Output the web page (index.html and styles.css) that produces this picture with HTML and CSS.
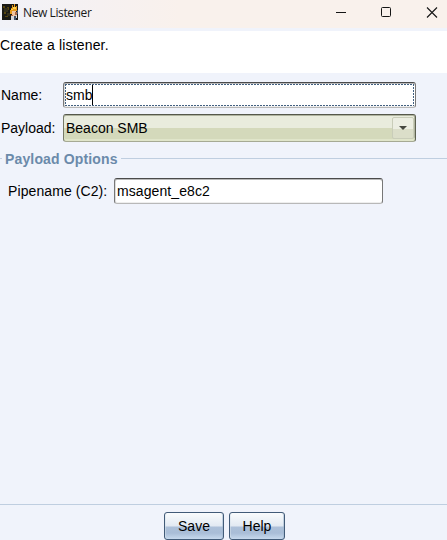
FILE: index.html
```html
<!DOCTYPE html>
<html lang="en">
<head>
<meta charset="utf-8">
<title>New Listener</title>
<link rel="stylesheet" href="styles.css">
</head>
<body>
<div class="window">
  <header class="titlebar">
    <svg class="app-icon" width="16" height="16" viewBox="0 0 16 16" shape-rendering="crispEdges">
      <path fill="#191a16" d="M0 0h16v16H0z"/>
      <path fill="#57470f" d="M1 2h2v2H1zM5 3h2v3H5zM2 8h2v2H2zM3 12h3v1H3z"/>
      <path fill="#33301c" d="M2 4h4v4H2zM5 9h3v3H5z"/>
      <path fill="#e69a1c" d="M9 4h6v3H9zM10 1h1v3h-1zM12 0h1v4h-1zM14 2h1v4h-1zM8 6h2v4H8z"/>
      <path fill="#ffd34a" d="M11 3h3v2h-3zM9 5h2v1H9z"/>
      <path fill="#f1c6a0" d="M10 7h4v5h-4z"/>
      <path fill="#b06a45" d="M13 8h2v3h-2zM9 11h2v2H9z"/>
      <path fill="#d9d8da" d="M9 12h3v4H9zM14 11h1v3h-1z"/>
      <path fill="#43536a" d="M12 12h2v4h-2zM15 6h1v4h-1z"/>
    </svg>
    <span class="title">New Listener</span>
    <svg class="controls" width="104" height="12" viewBox="0 0 104 12" fill="none" stroke="#151515">
      <path d="M1 6.5h10"/>
      <rect x="46.5" y="1.5" width="9" height="9" rx="1"/>
      <path d="M92 1.5l10 10M102 1.5l-10 10" stroke-width="1.1"/>
    </svg>
  </header>
  <div class="description">Create a listener.</div>
  <main class="form">
    <div class="row">
      <span class="label">Name:</span>
      <div class="field focused"><span>smb</span><i class="caret"></i></div>
    </div>
    <div class="row combo-row">
      <span class="label">Payload:</span>
      <div class="field combo"><span>Beacon SMB</span>
        <span class="arrow"><svg width="8" height="4" viewBox="0 0 8 4"><path fill="#464840" d="M0 0h8L4 4z"/></svg></span>
      </div>
    </div>
    <div class="legend"><span>Payload Options</span></div>
    <div class="row pipe-row">
      <span class="label">Pipename (C2):</span>
      <div class="field pipe"><span>msagent_e8c2</span></div>
    </div>
  </main>
  <footer class="actions">
    <button class="btn save">Save</button>
    <button class="btn help">Help</button>
  </footer>
</div>
</body>
</html>
```
FILE: styles.css
```css
* { box-sizing: border-box; }
body { margin: 0; }
.window {
  width: 447px; height: 540px; overflow: hidden;
  display: flex; flex-direction: column;
  background: #f0f3fb; color: #000;
  font: 14px/18px "Liberation Sans", Arial, sans-serif;
}
.titlebar {
  height: 28px; flex: none; display: flex; align-items: center;
  padding: 0 8px 4px 2px;
  background: linear-gradient(90deg, #f1f2f8 0, #f6f1f1 100px, #f9f1ec 180px);
}
.app-icon { flex: none; }
.title {
  margin-left: 5px; padding-top: 1px; white-space: nowrap; color: #191919;
  font: 12px/16px "Open Sans", "Noto Sans", sans-serif; letter-spacing: -.4px;
}
.controls { margin-left: auto; flex: none; }
.description { height: 42px; flex: none; margin-top: 3px; padding-top: 5px; background: #fff; letter-spacing: .16px; }
.form { flex: 1; padding-top: 9px; }
.row { display: flex; align-items: center; white-space: nowrap; }
.label { width: 62px; margin-left: 1px; flex: none; }
.field {
  width: 353px; height: 26px; display: flex; align-items: center; padding-left: 2px;
  border: 1px solid #777; border-top-color: #4a4a4a; border-bottom-color: #b8b8b8;
  border-radius: 3px; background: #fff;
  box-shadow: inset 0 1px #b9b9b9, inset 0 -1px #eee, inset 1px 0 #ddd;
}
.focused { position: relative; }
.focused::after {
  content: ""; position: absolute; inset: 1px;
  background:
    repeating-linear-gradient(90deg, #426080 0 2px, #fff 2px 3px) 0 0 / 100% 1px no-repeat,
    repeating-linear-gradient(90deg, #426080 0 2px, #fff 2px 3px) 0 100% / 100% 1px no-repeat,
    repeating-linear-gradient(#426080 0 2px, #fff 2px 3px) 0 0 / 1px 100% no-repeat,
    repeating-linear-gradient(#426080 0 2px, #fff 2px 3px) 100% 0 / 1px 100% no-repeat;
}
.caret { width: 1px; height: 20px; background: #000; }
.combo-row { margin-top: 6px; }
.combo {
  height: 28px; padding: 0 1px 0 2px;
  border-color: #55584b #5d6150 #a6aa94 #777b68;
  background: linear-gradient(#e9ecdd 0 13px, #d4d9bb 13px);
  box-shadow: inset 0 1px #b0b49f, inset 0 -2px #e0e5ca, inset -1px 0 #b0b49f;
}
.arrow {
  width: 22px; height: 22px; margin-left: auto;
  display: flex; align-items: center; justify-content: center;
  border: 1px solid #c9cdb9; border-radius: 2px;
  background: linear-gradient(#eceee2 0 11px, #dbdec9 11px);
}
.legend {
  height: 18px; margin-top: 8px; display: flex; align-items: center;
  color: #6b8aaa; font-weight: bold; white-space: nowrap; letter-spacing: .15px;
}
.legend::before, .legend::after { content: ""; height: 1px; margin-bottom: 1px; background: #bfcee0; }
.legend::before { width: 2px; margin-right: 3px; }
.legend::after { flex: 1; margin-left: 3px; }
.pipe-row { margin-top: 10px; padding-left: 7px; letter-spacing: .09px; }
.pipe-row .label { width: 106px; }
.pipe { width: 269px; }
.actions {
  height: 36px; flex: none; padding: 7px 0 0 2px;
  display: flex; justify-content: center; gap: 5px;
  border-top: 1px solid #bfcee0;
}
.btn {
  height: 28px; padding: 0; font: inherit; color: #000;
  border: 1px solid #425b78; border-radius: 3px;
  background: linear-gradient(#fafcfd 0, #e2e9f2 13px, #adc0d9 14px, #a9bdd7 20px, #c7d9ed 26px);
  box-shadow: inset 1px 0 #d8e2ed88, inset -1px 0 #9eb4cc88;
}
.save { width: 60px; }
.help { width: 56px; }
```
